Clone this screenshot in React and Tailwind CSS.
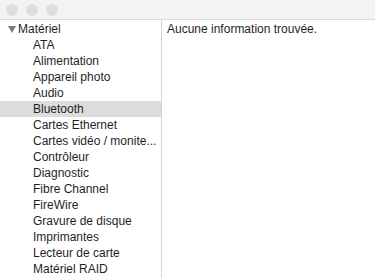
import React from 'react';

const items = [
  'ATA',
  'Alimentation',
  'Appareil photo',
  'Audio',
  'Bluetooth',
  'Cartes Ethernet',
  'Cartes vidéo / monite...',
  'Contrôleur',
  'Diagnostic',
  'Fibre Channel',
  'FireWire',
  'Gravure de disque',
  'Imprimantes',
  'Lecteur de carte',
  'Matériel RAID',
];

export default function App() {
  return (
    <div className="w-[375px] h-[278px] overflow-hidden bg-white text-[12px] text-[#1f1f1f]" style={{ fontFamily: '"Liberation Sans", Arial, sans-serif' }}>
      {/* title bar */}
      <div className="h-[20px] bg-[#f3f3f3] border-b border-[#d9d9d9] flex items-center gap-[8px] pl-[6px]">
        <span className="w-[12px] h-[12px] rounded-full bg-[#dedede]" />
        <span className="w-[12px] h-[12px] rounded-full bg-[#dedede]" />
        <span className="w-[12px] h-[12px] rounded-full bg-[#dedede]" />
      </div>
      <div className="flex h-[258px]">
        <div className="w-[162px] border-r border-[#d4d4d4] pt-[1px]">
          <div className="h-[16px] flex items-center pl-[8px]">
            <svg width="8" height="7" viewBox="0 0 8 7" className="mr-[2px]">
              <path d="M0 0 H8 L4 7 Z" fill="#7d7d7d" />
            </svg>
            <span>Matériel</span>
          </div>
          {items.map((name) => (
            <div
              key={name}
              className={`h-[16px] flex items-center pl-[33px] ${name === 'Bluetooth' ? 'bg-[#dcdcdc]' : ''}`}
            >
              {name}
            </div>
          ))}
        </div>
        <div className="flex-1 pl-[5px] pt-[1px]">
          <div className="h-[16px] flex items-center">Aucune information trouvée.</div>
        </div>
      </div>
    </div>
  );
}
